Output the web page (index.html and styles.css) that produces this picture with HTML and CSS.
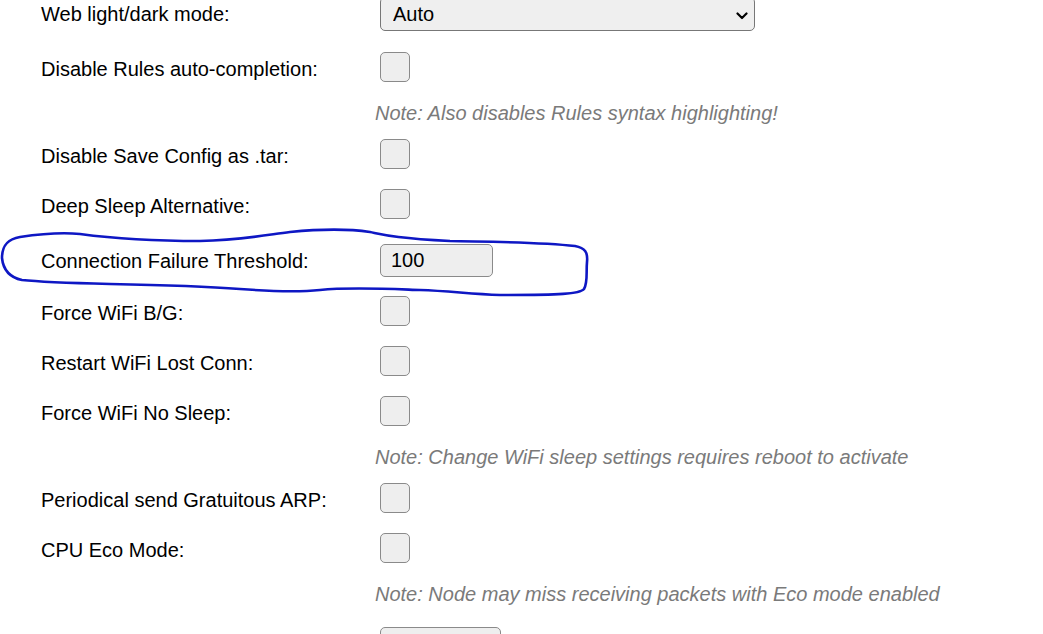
FILE: index.html
```html
<!DOCTYPE html>
<html lang="en">
<head>
<meta charset="utf-8">
<title>Advanced Settings</title>
<link rel="stylesheet" href="styles.css">
</head>
<body>
<div class="page">
  <div class="settings">
    <div class="row row-select">
      <label class="lbl">Web light/dark mode:</label>
      <span class="sel-wrap">
        <select class="sel"><option>Auto</option><option>Light</option><option>Dark</option></select>
        <svg class="chev" width="12" height="8" viewBox="0 0 12 8" aria-hidden="true"><path d="M1.5 1.5 L6 6 L10.5 1.5" fill="none" stroke="#000" stroke-width="2.2" stroke-linecap="round" stroke-linejoin="round"/></svg>
      </span>
    </div>
    <div class="row">
      <label class="lbl">Disable Rules auto-completion:</label>
      <span class="check"></span>
    </div>
    <div class="note">Note: Also disables Rules syntax highlighting!</div>
    <div class="row">
      <label class="lbl">Disable Save Config as .tar:</label>
      <span class="check"></span>
    </div>
    <div class="row">
      <label class="lbl">Deep Sleep Alternative:</label>
      <span class="check"></span>
    </div>
    <div class="row row-input">
      <label class="lbl">Connection Failure Threshold:</label>
      <input class="num" type="text" value="100">
    </div>
    <div class="row">
      <label class="lbl">Force WiFi B/G:</label>
      <span class="check"></span>
    </div>
    <div class="row">
      <label class="lbl">Restart WiFi Lost Conn:</label>
      <span class="check"></span>
    </div>
    <div class="row">
      <label class="lbl">Force WiFi No Sleep:</label>
      <span class="check"></span>
    </div>
    <div class="note">Note: Change WiFi sleep settings requires reboot to activate</div>
    <div class="row">
      <label class="lbl">Periodical send Gratuitous ARP:</label>
      <span class="check"></span>
    </div>
    <div class="row">
      <label class="lbl">CPU Eco Mode:</label>
      <span class="check"></span>
    </div>
    <div class="note">Note: Node may miss receiving packets with Eco mode enabled</div>
    <div class="row row-last">
      <label class="lbl"></label>
      <input class="num num-wide" type="text" value="">
    </div>
  </div>
  <svg class="scribble" width="600" height="80" viewBox="0 225 600 80" aria-hidden="true">
    <path d="M2 258 C 2 245, 8 239, 20 237 C 40 234, 60 232, 80 234 C 110 238, 150 241, 200 241 C 240 240, 260 236, 290 232 C 320 229, 350 229, 370 232 C 385 235, 395 238, 450 241 C 500 242, 540 242, 575 246 C 585 248, 588 252, 587 262 C 586 272, 588 282, 584 289 C 580 294, 560 295, 500 295 C 470 294, 450 291, 420 290 C 390 289, 350 287, 320 290 C 300 292, 280 292, 240 289 C 200 286, 160 285, 110 284 C 70 283, 40 282, 22 280 C 8 277, 3 268, 2 258 Z" fill="none" stroke="#0e17c4" stroke-width="2.6" stroke-linecap="round"/>
  </svg>
</div>
</body>
</html>
```
FILE: styles.css
```css
html, body {
  margin: 0;
  padding: 0;
  background: #ffffff;
}

body {
  font-family: "Liberation Sans", Arial, sans-serif;
  font-size: 20px;
  color: #000;
  overflow: hidden;
}

.page {
  position: relative;
  width: 1043px;
  height: 634px;
  overflow: hidden;
}

.settings {
  margin-top: -13px;
  display: flex;
  flex-direction: column;
}

.row {
  display: grid;
  grid-template-columns: 339px auto;
  align-items: center;
  justify-content: start;
  padding: 10px 0 10px 41px;
}

.lbl {
  line-height: 24px;
  padding-top: 3px;
}

.row-select {
  padding: 10px 0 11px 41px;
}

.row-select .lbl,
.row-input .lbl {
  padding-top: 0;
}

.row-input {
  padding: 15px 0 9px 41px;
}

.row-last {
  padding-top: 17px;
}

.check {
  display: block;
  width: 28px;
  height: 28px;
  border: 1px solid #8a8a8a;
  border-radius: 5px;
  background: #eeeeee;
}

.sel-wrap {
  position: relative;
  display: block;
  width: 375px;
  height: 34px;
}

.sel {
  appearance: none;
  -webkit-appearance: none;
  display: block;
  box-sizing: border-box;
  width: 375px;
  height: 34px;
  font-family: "Liberation Sans", Arial, sans-serif;
  font-size: 20px;
  color: #000;
  background: #efefef;
  border: 1px solid #777;
  border-radius: 5px;
  padding: 0 12px;
  margin: 0;
}

.chev {
  position: absolute;
  right: 7px;
  top: 15px;
  pointer-events: none;
}

.num {
  box-sizing: border-box;
  width: 113px;
  height: 33px;
  font-family: "Liberation Sans", Arial, sans-serif;
  font-size: 20px;
  color: #000;
  background: #eeeeee;
  border: 1px solid #8a8a8a;
  border-radius: 5px;
  padding: 0 10px;
  margin: 0;
}

.num-wide {
  width: 121px;
}

.note {
  padding-left: 375px;
  height: 37px;
  padding-top: 5px;
  box-sizing: border-box;
  display: flex;
  align-items: center;
  font-style: italic;
  color: #7a7a7a;
}

.scribble {
  position: absolute;
  left: 0;
  top: 225px;
  pointer-events: none;
}
```
